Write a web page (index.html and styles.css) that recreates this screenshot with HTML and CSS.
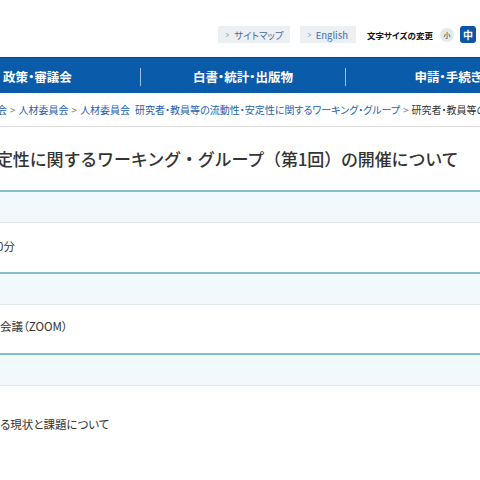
FILE: index.html
```html
<!DOCTYPE html>
<html lang="ja">
<head>
<meta charset="utf-8">
<title>研究者・教員等の流動性・安定性に関するワーキング・グループ（第1回）の開催について</title>
<link rel="stylesheet" href="styles.css">
</head>
<body>
<header class="site-header">
  <div class="utility">
    <a class="util-link" href="#"><span class="chev">&gt;</span>サイトマップ</a>
    <a class="util-link util-en" href="#"><span class="chev">&gt;</span>English</a>
    <div class="font-size">
      <span class="font-size-label">文字サイズの変更</span>
      <button class="fs-btn fs-small" type="button">小</button>
      <button class="fs-btn fs-mid" type="button">中</button>
    </div>
  </div>
</header>

<nav class="global-nav">
  <ul class="gnav-list">
    <li class="gnav-item"><a href="#">政策・審議会</a></li>
    <li class="gnav-item"><a href="#">白書・統計・出版物</a></li>
    <li class="gnav-item"><a href="#">申請・手続き</a></li>
  </ul>
</nav>

<div class="breadcrumb">
  <a class="bc-first" href="#">会</a><span class="bc-sep">&gt;</span><a href="#">人材委員会</a><span class="bc-sep">&gt;</span><a href="#">人材委員会&ensp;研究者・教員等の流動性・安定性に関するワーキング・グループ</a><span class="bc-sep">&gt;</span><span class="bc-current">研究者・教員等の</span>
</div>

<main class="content">
  <h1 class="page-title">定性に関するワーキング・グループ（第1回）の開催について</h1>

  <div class="info-table">
    <div class="info-head"></div>
    <div class="info-body info-body-date"><span class="cut">0分</span></div>
    <div class="info-head"></div>
    <div class="info-body info-body-place">会議（ZOOM）</div>
    <div class="info-head"></div>
    <div class="info-body info-body-topic">る現状と課題について</div>
  </div>
</main>
</body>
</html>
```

FILE: styles.css
```css
html, body {
  margin: 0;
  padding: 0;
  background: #fff;
}

body {
  width: 480px;
  height: 480px;
  overflow: hidden;
  font-family: "Noto Sans CJK JP", "Noto Sans", sans-serif;
  color: #333;
}

a {
  text-decoration: none;
  color: inherit;
}

/* ---- header utility links ---- */
.site-header {
  height: 57px;
  box-sizing: border-box;
  padding-top: 26px;
}

.utility {
  display: flex;
  align-items: center;
  justify-content: flex-end;
  height: 17px;
  margin-right: 4px;
}

.util-link {
  display: flex;
  align-items: center;
  height: 17px;
  box-sizing: border-box;
  padding: 0 6px 0 7px;
  background: #edf0f3;
  color: #4d6a93;
  font-size: 9.5px;
  font-feature-settings: "palt";
  margin-right: 10px;
}

.util-en {
  color: #3c6cb4;
  padding-right: 8px;
  margin-right: 11px;
}

.chev {
  color: #8a97a8;
  font-size: 9px;
  margin-right: 4px;
  transform: scaleX(0.7);
  display: inline-block;
}

.font-size {
  display: flex;
  align-items: center;
}

.font-size-label {
  font-size: 8.5px;
  font-weight: 700;
  color: #111;
  font-feature-settings: "palt";
  margin-right: 7px;
}

.fs-btn {
  border: 0;
  padding: 0;
  margin: 0;
  font-family: inherit;
  display: flex;
  align-items: center;
  justify-content: center;
}

.fs-small {
  width: 14px;
  height: 14px;
  border-radius: 50%;
  background: #e2ebe9;
  color: #333;
  font-size: 7px;
  margin-right: 6px;
}

.fs-mid {
  width: 16px;
  height: 17px;
  border-radius: 3px;
  background: #0b56a8;
  color: #fff;
  font-size: 10px;
  font-weight: 700;
}

/* ---- global navigation ---- */
.global-nav {
  height: 36px;
  background: #0b5bab;
  border-top: 1px solid #094a8c;
  box-sizing: border-box;
  overflow: hidden;
}

.gnav-list {
  list-style: none;
  margin: 0 0 0 -65px;
  padding: 0;
  display: grid;
  grid-template-columns: repeat(3, 205px);
  height: 100%;
  align-items: center;
}

.gnav-item {
  display: flex;
  justify-content: center;
  align-items: center;
  height: 18px;
  margin-top: 2px;
  color: #fff;
  font-size: 12.5px;
  font-weight: 700;
  font-feature-settings: "palt";
  white-space: nowrap;
}

.gnav-item + .gnav-item {
  border-left: 1px solid #9cc0e6;
}

/* ---- breadcrumb ---- */
.breadcrumb {
  display: flex;
  align-items: center;
  height: 33px;
  border-bottom: 1px solid #dcdcdc;
  font-size: 10px;
  font-feature-settings: "palt";
  white-space: nowrap;
  color: #1d5fae;
  overflow: hidden;
}

.bc-first {
  margin-left: -3px;
}

.bc-sep {
  color: #777;
  margin: 0 3px;
}

.bc-current {
  color: #333;
}

/* ---- page body ---- */
.page-title {
  margin: 0 0 0 -4px;
  height: 63px;
  display: flex;
  align-items: center;
  font-size: 17px;
  font-weight: 500;
  letter-spacing: -0.15px;
  color: #333;
  white-space: nowrap;
  border-bottom: 2px solid #86bdd2;
}

.info-head {
  height: 30px;
  background: #f2f9fc;
  border-bottom: 1px solid #dfe5e8;
}

.info-body {
  box-sizing: border-box;
  font-size: 11.5px;
  line-height: 17px;
  font-feature-settings: "palt";
  color: #333;
  border-bottom: 2px solid #86bdd2;
  white-space: nowrap;
}

.info-body-date {
  height: 51px;
  padding-top: 15px;
}

.info-body-place {
  height: 50px;
  padding-top: 13px;
}

.cut {
  display: inline-block;
  margin-left: -3px;
}

.info-body-topic {
  padding-top: 30px;
  border-bottom: 0;
}
```
